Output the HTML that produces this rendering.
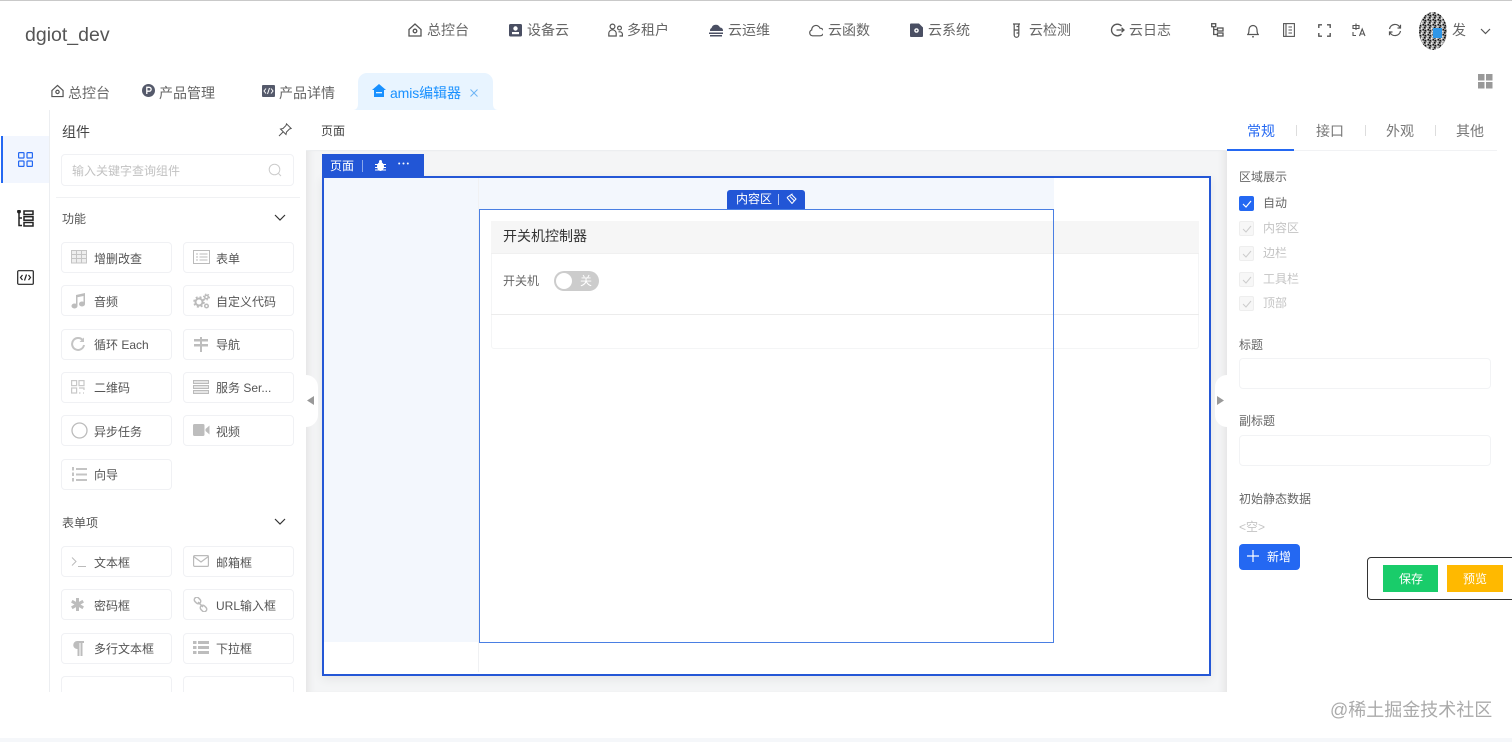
<!DOCTYPE html>
<html lang="zh-CN">
<head>
<meta charset="utf-8">
<title>dgiot_dev</title>
<style>
html,body{margin:0;padding:0;width:1512px;height:742px;overflow:hidden;background:#fff}
body{position:relative;font-family:"Liberation Sans","Noto Sans CJK SC",sans-serif;color:#555;filter:blur(.3px)}
div,span,svg{position:absolute}
.t{white-space:nowrap;line-height:20px;height:20px}
.n{font-size:14px;color:#666;top:20px}
.s{font-size:12px;color:#666}
.it{width:111px;height:31px;box-sizing:border-box;border:1px solid #f0f1f4;border-radius:4px;background:#fff;overflow:hidden}
.it .t{left:32px;top:5px;font-size:12px;color:#555}
.it.d1 .t{top:6px}
.it svg{left:9px;top:7px}
.dis{font-size:12px;color:#c4c4c4;left:1263px}
.cb{left:1239px;width:15px;height:15px;box-sizing:border-box;border:1px solid #eee;background:#f7f7f7;border-radius:2px}
.inp{left:1239px;width:252px;height:31px;box-sizing:border-box;border:1px solid #f2f3f5;border-radius:4px;background:#fff}
.sep{width:1px;height:11px;top:125px;background:#ddd}
</style>
</head>
<body>
<div style="left:0;top:0;width:1512px;height:1px;background:#c9c9c9"></div>
<div style="left:0;top:738px;width:1512px;height:4px;background:#f5f7fa"></div>

<div class="t" style="left:25px;top:25px;font-size:19.5px;color:#555">dgiot_dev</div>

<!-- top nav -->
<svg style="left:408px;top:23px" width="14" height="14" viewBox="0 0 14 14" fill="none" stroke="#555" stroke-width="1.3"><path d="M1 6.500 7 1l6 5.500V13H1z"/><circle cx="7" cy="8" r="1.800"/></svg>
<div class="t n" style="left:427px">总控台</div>
<svg style="left:509px;top:23px" width="13" height="14" viewBox="0 0 13 14"><rect x="0" y="1" width="13" height="12.500" rx="1.500" fill="#4a4f63"/><circle cx="6.500" cy="5.500" r="2.200" fill="#fff"/><rect x="3" y="9" width="7" height="2.200" fill="#fff"/></svg>
<div class="t n" style="left:527px">设备云</div>
<svg style="left:608px;top:23px" width="15" height="14" viewBox="0 0 15 14" fill="none" stroke="#555" stroke-width="1.200"><circle cx="4.500" cy="3.500" r="2.400"/><path d="M.8 13V10.500a3.200 3.200 0 0 1 7.400 0V13z"/><circle cx="11.500" cy="5" r="1.900"/><path d="M10.500 8.800h1.500a2.400 2.400 0 0 1 2.400 2.400V13h-3"/></svg>
<div class="t n" style="left:627px">多租户</div>
<svg style="left:708px;top:24px" width="16" height="13" viewBox="0 0 16 13" fill="#4a4f63"><path d="M2 7a3 3 0 0 1 1.500-3A4.500 4.500 0 0 1 12 3.500 3 3 0 0 1 15 7z"/><rect x="1" y="8.500" width="14" height="1.500"/><rect x="2" y="11" width="12" height="1.500"/></svg>
<div class="t n" style="left:728px">云运维</div>
<svg style="left:809px;top:23px" width="14" height="14" viewBox="0 0 14 14" fill="none" stroke="#555" stroke-width="1.200"><path d="M3.500 12.800a3 3 0 0 1-.8-5.800 4.300 4.300 0 0 1 8.300-1.800 3.800 3.800 0 0 1 0 7.600z"/></svg>
<div class="t n" style="left:828px">云函数</div>
<svg style="left:910px;top:23px" width="13" height="14" viewBox="0 0 13 14"><path d="M0 1.500A1 1 0 0 1 1 .5h8l4 4V13a1 1 0 0 1-1 1H1a1 1 0 0 1-1-1z" fill="#4a4f63"/><circle cx="6.500" cy="7.500" r="2.300" fill="#fff"/><circle cx="6.500" cy="7.500" r=".9" fill="#4a4f63"/></svg>
<div class="t n" style="left:928px">云系统</div>
<svg style="left:1013px;top:23px" width="7" height="15" viewBox="0 0 7 15" fill="none" stroke="#555" stroke-width="1.200"><path d="M0 1h7M1.200 1v11a2.300 2.300 0 0 0 4.600 0V1M1.500 7h4M3.500 3.500h2M3.500 10h2"/></svg>
<div class="t n" style="left:1029px">云检测</div>
<svg style="left:1110px;top:23px" width="15" height="14" viewBox="0 0 15 14" fill="none" stroke="#555" stroke-width="1.300"><path d="M11.500 3A5.800 5.800 0 1 0 11.500 11"/><path d="M6.500 7h7.500M11.500 4.800 14 7l-2.500 2.200"/></svg>
<div class="t n" style="left:1129px">云日志</div>

<!-- right tool icons -->
<svg style="left:1211px;top:23px" width="13" height="14" viewBox="0 0 13 14" fill="none" stroke="#555" stroke-width="1.300"><rect x=".7" y=".7" width="4" height="3"/><rect x="6.500" y="5" width="5.500" height="3"/><rect x="6.500" y="10" width="5.500" height="3"/><path d="M2.700 3.700V11.500h3.800M2.700 6.500h3.800"/></svg>
<svg style="left:1247px;top:23px" width="12" height="15" viewBox="0 0 12 15" fill="none" stroke="#555" stroke-width="1.200"><path d="M.8 11.500c1-1 1.200-2 1.200-5a4 4 0 0 1 8 0c0 3 .2 4 1.200 5z"/><path d="M5 13.800h2"/></svg>
<svg style="left:1283px;top:23px" width="12" height="14" viewBox="0 0 12 14" fill="none" stroke="#555" stroke-width="1.100"><rect x=".6" y=".6" width="10.800" height="12.800"/><path d="M3 .6v12.800M5.500 4h3.500M5.500 7h3.500M5.500 10h3.500"/></svg>
<svg style="left:1318px;top:24px" width="13" height="13" viewBox="0 0 13 13" fill="none" stroke="#555" stroke-width="1.400"><path d="M4 .8H.8V4M9 .8h3.200V4M4 12.200H.8V9M9 12.200h3.200V9"/></svg>
<svg style="left:1352px;top:23px" width="14" height="14" viewBox="0 0 14 14" fill="none" stroke="#555" stroke-width="1.100"><path d="M4 .5v6.500M1 2.500h6v3H1zM1 9v3.500h3"/><path d="M7.500 13 10.200 6 13 13M8.500 11h3.500"/></svg>
<svg style="left:1388px;top:23px" width="14" height="14" viewBox="0 0 14 14" fill="none" stroke="#555" stroke-width="1.200"><path d="M1.500 6A5.600 5.600 0 0 1 12 4.500M12.500 8A5.600 5.600 0 0 1 2 9.500"/><path d="M12.500 1.800V5h-3M1.500 12.200V9h3"/></svg>

<!-- avatar -->
<svg style="left:1419px;top:12px" width="28" height="38" viewBox="0 0 28 38">
<defs>
<pattern id="qr" width="5" height="5" patternUnits="userSpaceOnUse"><rect width="5" height="5" fill="#999"/><rect width="1.500" height="1.500" fill="#111"/><rect x="2" y=".5" width="1.500" height="2" fill="#eee"/><rect x="3.500" y="2" width="1.500" height="1.500" fill="#111"/><rect x=".5" y="3" width="1.500" height="1.500" fill="#111"/><rect x="3" y="3.500" width="1.500" height="1.500" fill="#ddd"/></pattern>
</defs>
<ellipse cx="14" cy="19" rx="14" ry="19" fill="url(#qr)"/>
<rect x="14" y="16" width="9" height="10" fill="#2f97e8"/>
</svg>
<div class="t n" style="left:1452px">发</div>
<svg style="left:1480px;top:28px" width="11" height="7" viewBox="0 0 11 7" fill="none" stroke="#555" stroke-width="1.200"><path d="M1 1l4.500 4.500L10 1"/></svg>

<!-- tabs -->
<svg style="left:51px;top:84px" width="13" height="14" viewBox="0 0 14 14" fill="none" stroke="#555" stroke-width="1.300"><path d="M1 6.500 7 1l6 5.500V13H1z"/><circle cx="7" cy="8" r="1.800"/></svg>
<div class="t n" style="left:68px;top:83px">总控台</div>
<svg style="left:142px;top:84px" width="13" height="13" viewBox="0 0 13 13"><circle cx="6.500" cy="6.500" r="6.500" fill="#555a6b"/><path d="M4.800 10V3.300h2.400a1.900 1.900 0 0 1 0 3.900H4.800" fill="none" stroke="#fff" stroke-width="1.300"/></svg>
<div class="t n" style="left:159px;top:83px">产品管理</div>
<svg style="left:262px;top:85px" width="13" height="12" viewBox="0 0 13 12"><rect width="13" height="12" rx="1" fill="#555a6b"/><path d="M4 3.500 2 6l2 2.500M9 3.500 11 6 9 8.500M7.500 3 5.500 9" fill="none" stroke="#fff" stroke-width="1"/></svg>
<div class="t n" style="left:279px;top:83px">产品详情</div>
<svg style="left:353px;top:72px" width="145" height="38" viewBox="0 0 145 38"><path d="M0 38c3 0 5-2 5-6V10a9 9 0 0 1 9-9h117a9 9 0 0 1 9 9v22c0 4 2 6 5 6z" fill="#e8f4ff"/></svg>
<svg style="left:372px;top:84px" width="14" height="13" viewBox="0 0 14 13"><path d="M7 0 14 6h-2v7H2V6H0z" fill="#1890ff"/><rect x="4" y="8" width="6" height="1.300" fill="#e8f4ff"/></svg>
<div class="t n" style="left:390px;top:83px;color:#1890ff;letter-spacing:-.1px">amis编辑器</div>
<svg style="left:470px;top:89px" width="8" height="8" viewBox="0 0 8 8" stroke="#6cb4f5" stroke-width="1"><path d="M.5.500l7 7M7.500.500l-7 7"/></svg>
<svg style="left:1478px;top:74px" width="15" height="15" viewBox="0 0 15 15" fill="#999"><rect width="6.500" height="6.500"/><rect x="8" width="6.500" height="6.500"/><rect y="8" width="6.500" height="6.500"/><rect x="8" y="8" width="6.500" height="6.500"/></svg>

<!-- left rail -->
<div style="left:2px;top:136px;width:47px;height:47px;background:#f2f6fe"></div>
<div style="left:1px;top:136px;width:2px;height:47px;background:#2468f2"></div>
<svg style="left:18px;top:152px" width="15" height="15" viewBox="0 0 15 15" fill="none" stroke="#2468f2" stroke-width="1.200"><rect x=".6" y=".6" width="5.400" height="5.400" rx=".8"/><rect x="9" y=".6" width="5.400" height="5.400" rx=".8"/><rect x=".6" y="9" width="5.400" height="5.400" rx=".8"/><rect x="9" y="9" width="5.400" height="5.400" rx=".8"/></svg>
<svg style="left:17px;top:210px" width="17" height="17" viewBox="0 0 17 17" fill="none" stroke="#222" stroke-width="1.500"><path d="M2 1v14.500h3M2 8h3"/><circle cx="2" cy="1.500" r="1.200" fill="#222"/><rect x="7" y="1" width="9" height="3.500"/><rect x="7" y="6.700" width="9" height="3.500"/><rect x="7" y="12.500" width="9" height="3.500"/></svg>
<svg style="left:17px;top:270px" width="17" height="15" viewBox="0 0 17 15" fill="none" stroke="#222" stroke-width="1.200"><rect x=".7" y=".7" width="15.600" height="13.600" rx="1"/><path d="M5.500 5 3.500 7.500 5.500 10M11.500 5l2 2.500-2 2.500M9.500 4.500 7.500 10.500"/></svg>
<div style="left:49px;top:110px;width:1px;height:582px;background:#eceef1"></div>

<!-- main canvas bg -->
<div style="left:306px;top:151px;width:921px;height:541px;background:#f4f5f6;box-shadow:inset 8px 0 8px -6px #e2e2e2,inset -8px 0 8px -6px #e2e2e2"></div>
<div style="left:306px;top:150px;width:921px;height:1px;background:#eceef0"></div>
<div class="t s" style="left:321px;top:121px;color:#444">页面</div>

<!-- left panel -->
<div class="t" style="left:62px;top:122px;font-size:14px;color:#444">组件</div>
<svg style="left:278px;top:123px" width="14" height="14" viewBox="0 0 14 14" fill="none" stroke="#555" stroke-width="1"><path d="M8.500.8 13.200 5.500 11.500 6 8.500 9 8 11.500 2.500 6 5 5.500 8 2.500zM5 9 1 13"/></svg>
<div style="left:61px;top:154px;width:233px;height:32px;box-sizing:border-box;border:1px solid #f0f1f4;border-radius:4px"></div>
<div class="t s" style="left:72px;top:161px;color:#c2c2c2">输入关键字查询组件</div>
<svg style="left:268px;top:163px" width="14" height="14" viewBox="0 0 14 14" fill="none" stroke="#ccc" stroke-width="1"><circle cx="6.500" cy="6.500" r="5.300"/><path d="M10.500 10.500 13 13"/></svg>
<div style="left:56px;top:197px;width:244px;height:1px;background:#f0f1f3"></div>
<div class="t s" style="left:62px;top:209px;color:#555">功能</div>
<svg style="left:274px;top:214px" width="12" height="8" viewBox="0 0 12 8" fill="none" stroke="#333" stroke-width="1.200"><path d="M1 1l5 5 5-5"/></svg>

<div class="it d1" style="left:61px;top:242px"><svg width="16" height="14" viewBox="0 0 16 14" fill="none" stroke="#c4c4c4"><rect x=".5" y=".5" width="15" height="12.500" fill="#eee"/><path d="M.5 4.500h15M.5 8.500h15M5.500 .5v12.500M10.500 .5v12.500"/></svg><span class="t">增删改查</span></div>
<div class="it d1" style="left:183px;top:242px"><svg width="17" height="14" viewBox="0 0 17 14" fill="none" stroke="#bbb"><rect x=".5" y=".5" width="16" height="13"/><path d="M3 4h2M6.500 4h8M3 7h2M6.500 7h8M3 10h2M6.500 10h8"/></svg><span class="t">表单</span></div>
<div class="it d1" style="left:61px;top:285px"><svg width="15" height="16" viewBox="0 0 15 16" fill="#bdbdbd"><path d="M5 2 14 0v11h-1.500V3L6.500 4.300V13H5z"/><ellipse cx="3.500" cy="13" rx="3" ry="2.500"/><ellipse cx="11" cy="11" rx="3" ry="2.500"/></svg><span class="t">音频</span></div>
<div class="it d1" style="left:183px;top:285px"><svg width="17" height="16" viewBox="0 0 17 16" fill="none" stroke="#bbb"><circle cx="6" cy="9" r="3.500" stroke-width="2"/><circle cx="6" cy="9" r="5" stroke-width="1.600" stroke-dasharray="2 2"/><circle cx="13.500" cy="4" r="1.800" stroke-width="1.500"/><circle cx="13.500" cy="4" r="3" stroke-width="1" stroke-dasharray="1.500 1.500"/><circle cx="13.500" cy="13" r="1.800" stroke-width="1.500"/></svg><span class="t">自定义代码</span></div>
<div class="it" style="left:61px;top:329px"><svg width="14" height="14" viewBox="0 0 14 14" fill="none" stroke="#c4c4c4" stroke-width="2"><path d="M12 3.500A6 6 0 1 0 13 8"/><path d="M13 .5V5H8.500" fill="#c4c4c4" stroke="none"/></svg><span class="t">循环 Each</span></div>
<div class="it" style="left:183px;top:329px"><svg width="16" height="15" viewBox="0 0 16 15" fill="#bdbdbd"><rect x="7" y="0" width="2" height="15"/><rect x="1" y="2" width="14" height="2.500"/><rect x="1" y="7" width="14" height="2.500"/></svg><span class="t">导航</span></div>
<div class="it" style="left:61px;top:372px"><svg width="14" height="14" viewBox="0 0 14 14" fill="none" stroke="#c8c8c8" stroke-width="1.200"><rect x=".6" y=".6" width="5" height="5"/><rect x="8" y=".6" width="5" height="5"/><rect x=".6" y="8" width="5" height="5"/><path d="M8 8h5v2M8 13h1.500M12 13h1"/></svg><span class="t">二维码</span></div>
<div class="it" style="left:183px;top:372px"><svg width="16" height="14" viewBox="0 0 16 14" fill="none" stroke="#bbb"><rect x=".5" y=".5" width="15" height="3" fill="#e5e5e5"/><rect x=".5" y="5.500" width="15" height="3" fill="#e5e5e5"/><rect x=".5" y="10.500" width="15" height="3" fill="#e5e5e5"/></svg><span class="t">服务 Ser...</span></div>
<div class="it d1" style="left:61px;top:415px"><svg style="left:9px;top:6px" width="17" height="17" viewBox="0 0 17 17" fill="none" stroke="#bbb" stroke-width="1.300"><circle cx="8.500" cy="8.500" r="7.500"/></svg><span class="t">异步任务</span></div>
<div class="it d1" style="left:183px;top:415px"><svg width="17" height="14" viewBox="0 0 17 14" fill="#bdbdbd"><rect x="0" y="1" width="11.500" height="12" rx="1.500"/><path d="M12.500 6 16.500 2.500V11.500L12.500 8z"/></svg><span class="t">视频</span></div>
<div class="it" style="left:61px;top:459px"><svg width="16" height="15" viewBox="0 0 16 15" fill="#c4c4c4"><rect x="5" y="1" width="11" height="2"/><rect x="5" y="6.500" width="11" height="2"/><rect x="5" y="12" width="11" height="2"/><rect x="1" y="0" width="2" height="3.500"/><rect x="1" y="5.500" width="2" height="3.500"/><rect x="1" y="11" width="2" height="3.500"/></svg><span class="t">向导</span></div>

<div class="t s" style="left:62px;top:513px;color:#555">表单项</div>
<svg style="left:274px;top:518px" width="12" height="8" viewBox="0 0 12 8" fill="none" stroke="#333" stroke-width="1.200"><path d="M1 1l5 5 5-5"/></svg>

<div class="it d1" style="left:61px;top:546px"><svg width="16" height="12" style="left:9px;top:9px" viewBox="0 0 16 12" fill="none" stroke="#bbb"><path d="M1 1.500 5 5.500 1 9.500M7 10.500h8"/></svg><span class="t">文本框</span></div>
<div class="it d1" style="left:183px;top:546px"><svg width="16" height="12" style="left:9px;top:8px" viewBox="0 0 16 12" fill="none" stroke="#bbb" stroke-width="1.200"><rect x=".6" y=".6" width="14.800" height="10.800" rx="1"/><path d="M.6 1.500 8 7l7.400-5.500"/></svg><span class="t">邮箱框</span></div>
<div class="it d1" style="left:61px;top:589px"><svg width="13" height="13" style="left:9px;top:8px" viewBox="0 0 13 13" stroke="#bdbdbd" stroke-width="3"><path d="M6.500 0v13M.8 3.200l11.400 6.600M12.200 3.200.8 9.800"/></svg><span class="t">密码框</span></div>
<div class="it d1" style="left:183px;top:589px"><svg width="15" height="15" viewBox="0 0 15 15" fill="none" stroke="#bbb" stroke-width="1.500"><rect x="1" y="1" width="7" height="5" rx="2.500" transform="rotate(45 4.500 3.500)"/><rect x="7" y="9" width="7" height="5" rx="2.500" transform="rotate(45 10.500 11.500)"/><path d="M5 5l5 5"/></svg><span class="t">URL输入框</span></div>
<div class="it" style="left:61px;top:633px"><svg width="12" height="15" style="left:10px" viewBox="0 0 12 15" fill="#bdbdbd"><path d="M5 0h7v2h-1.500v13H8.500V2H7.500v13H5.500V8A4 4 0 0 1 5 0z"/></svg><span class="t">多行文本框</span></div>
<div class="it" style="left:183px;top:633px"><svg width="16" height="13" viewBox="0 0 16 13" fill="#bdbdbd"><rect width="3.500" height="3"/><rect x="5" width="11" height="3"/><rect y="5" width="3.500" height="3"/><rect x="5" y="5" width="11" height="3"/><rect y="10" width="3.500" height="3"/><rect x="5" y="10" width="11" height="3"/></svg><span class="t">下拉框</span></div>
<div style="left:61px;top:676px;width:111px;height:16px;box-sizing:border-box;border:1px solid #f0f1f4;border-bottom:0;border-radius:4px 4px 0 0"></div>
<div style="left:183px;top:676px;width:111px;height:16px;box-sizing:border-box;border:1px solid #f0f1f4;border-bottom:0;border-radius:4px 4px 0 0"></div>

<!-- canvas -->
<div style="left:322px;top:176px;width:889px;height:500px;box-sizing:border-box;background:#fff;border:2px solid #2457d6;box-shadow:0 3px 10px rgba(0,0,0,.07)"></div>
<div style="left:324px;top:178px;width:154px;height:464px;background:#f3f7fd"></div>
<div style="left:478px;top:178px;width:1px;height:494px;background:#f0f1f3"></div>
<div style="left:479px;top:178px;width:575px;height:31px;background:#f3f7fd"></div>

<div style="left:491px;top:221px;width:708px;height:128px;box-sizing:border-box;border:1px solid #f4f5f6;border-radius:3px;background:#fff"></div>
<div style="left:491px;top:221px;width:708px;height:32px;background:#f6f6f6;border-bottom:1px solid #f0f0f0"></div>
<div style="left:491px;top:314px;width:708px;height:1px;background:#ececec"></div>
<div class="t" style="left:503px;top:226px;font-size:14px;color:#333">开关机控制器</div>
<div class="t s" style="left:503px;top:271px;color:#666">开关机</div>
<div style="left:554px;top:271px;width:45px;height:20px;border-radius:10px;background:#ccc"></div>
<div style="left:556px;top:273px;width:16px;height:16px;border-radius:50%;background:#fff"></div>
<div class="t s" style="left:580px;top:271px;color:#fff">关</div>

<div style="left:479px;top:209px;width:575px;height:434px;box-sizing:border-box;border:1px solid #4a7fe3"></div>

<div style="left:322px;top:154px;width:102px;height:23px;background:#2256d6"></div>
<div class="t s" style="left:330px;top:156px;color:#fff">页面</div>
<div style="left:362px;top:160px;width:1px;height:12px;background:#8aa8ea"></div>
<svg style="left:375px;top:160px" width="11" height="11" viewBox="0 0 11 11" fill="#fff"><ellipse cx="5.500" cy="6.500" rx="3.500" ry="4.500"/><rect x="0" y="4" width="11" height="1"/><rect x="0" y="7" width="11" height="1"/><rect x="0" y="9.500" width="11" height="1"/><circle cx="5.500" cy="1.500" r="1.500"/></svg>
<svg style="left:398px;top:162px" width="11" height="3" viewBox="0 0 11 3" fill="#fff"><circle cx="1.200" cy="1.500" r="1"/><circle cx="5.500" cy="1.500" r="1"/><circle cx="9.800" cy="1.500" r="1"/></svg>

<div style="left:727px;top:190px;width:78px;height:19px;background:#2256d6;border-radius:3px 3px 0 0"></div>
<div class="t s" style="left:736px;top:189px;color:#fff">内容区</div>
<div style="left:778px;top:194px;width:1px;height:11px;background:#b5c8f2"></div>
<svg style="left:786px;top:193px" width="11" height="11" viewBox="0 0 11 11" fill="none" stroke="#fff"><path d="M1 4.500 6.500.8M5.500 1.500 10 6 6 10.500 1 4.500M4 3.500l4.500 4.500"/></svg>

<!-- collapse handles -->
<div style="left:306px;top:375px;width:12px;height:52px;background:#fff;border-radius:0 12px 12px 0"></div>
<svg style="left:307px;top:396px" width="7" height="9" viewBox="0 0 7 9" fill="#999"><path d="M7 0v9L0 4.500z"/></svg>
<div style="left:1215px;top:375px;width:12px;height:52px;background:#fff;border-radius:12px 0 0 12px"></div>
<svg style="left:1217px;top:396px" width="7" height="9" viewBox="0 0 7 9" fill="#999"><path d="M0 0v9l7-4.500z"/></svg>

<!-- right panel -->
<div style="left:1227px;top:110px;width:285px;height:628px;background:#fff"></div>
<div style="left:1227px;top:150px;width:270px;height:1px;background:#f1f2f4"></div>
<div style="left:1227px;top:149px;width:67px;height:2px;background:#2468f2"></div>
<div class="t" style="left:1247px;top:121px;font-size:14px;color:#2468f2">常规</div>
<div class="sep" style="left:1296px"></div>
<div class="t" style="left:1316px;top:121px;font-size:14px;color:#777">接口</div>
<div class="sep" style="left:1365px"></div>
<div class="t" style="left:1386px;top:121px;font-size:14px;color:#777">外观</div>
<div class="sep" style="left:1435px"></div>
<div class="t" style="left:1456px;top:121px;font-size:14px;color:#777">其他</div>

<div class="t s" style="left:1239px;top:167px">区域展示</div>
<div class="cb" style="top:196px;background:#2468f2;border-color:#2468f2"></div>
<svg style="left:1242px;top:200px" width="10" height="8" viewBox="0 0 10 8" fill="none" stroke="#fff" stroke-width="1.200"><path d="M1 4l3 3 5-6"/></svg>
<div class="t s" style="left:1263px;top:193px">自动</div>

<div class="cb" style="top:221px"></div>
<svg style="left:1242px;top:225px" width="10" height="8" viewBox="0 0 10 8" fill="none" stroke="#ccc"><path d="M1 4l3 3 5-6"/></svg>
<div class="t dis" style="top:218px">内容区</div>
<div class="cb" style="top:246px"></div>
<svg style="left:1242px;top:250px" width="10" height="8" viewBox="0 0 10 8" fill="none" stroke="#ccc"><path d="M1 4l3 3 5-6"/></svg>
<div class="t dis" style="top:243px">边栏</div>
<div class="cb" style="top:272px"></div>
<svg style="left:1242px;top:276px" width="10" height="8" viewBox="0 0 10 8" fill="none" stroke="#ccc"><path d="M1 4l3 3 5-6"/></svg>
<div class="t dis" style="top:269px">工具栏</div>
<div class="cb" style="top:296px"></div>
<svg style="left:1242px;top:300px" width="10" height="8" viewBox="0 0 10 8" fill="none" stroke="#ccc"><path d="M1 4l3 3 5-6"/></svg>
<div class="t dis" style="top:293px">顶部</div>

<div class="t s" style="left:1239px;top:335px">标题</div>
<div class="inp" style="top:358px"></div>
<div class="t s" style="left:1239px;top:411px">副标题</div>
<div class="inp" style="top:435px"></div>
<div class="t s" style="left:1239px;top:489px">初始静态数据</div>
<div class="t s" style="left:1239px;top:517px;color:#c4c4c4">&lt;空&gt;</div>
<div style="left:1239px;top:544px;width:61px;height:26px;background:#2468f2;border-radius:4px"></div>
<svg style="left:1247px;top:550px" width="12" height="12" viewBox="0 0 12 12" stroke="#fff" stroke-width="1.200"><path d="M6 0v12M0 6h12"/></svg>
<div class="t s" style="left:1267px;top:547px;color:#fff">新增</div>

<div style="left:1367px;top:557px;width:160px;height:43px;box-sizing:border-box;border:1px solid #333;border-radius:4px;background:#fff"></div>
<div style="left:1383px;top:565px;width:55px;height:27px;background:#19cc6a"></div>
<div class="t s" style="left:1399px;top:569px;color:#fff">保存</div>
<div style="left:1447px;top:565px;width:56px;height:27px;background:#ffb900"></div>
<div class="t s" style="left:1463px;top:569px;color:#fff">预览</div>

<!-- watermark -->
<div class="t" style="left:1330px;top:700px;font-size:18px;color:#aaa">@稀土掘金技术社区</div>
</body>
</html>
